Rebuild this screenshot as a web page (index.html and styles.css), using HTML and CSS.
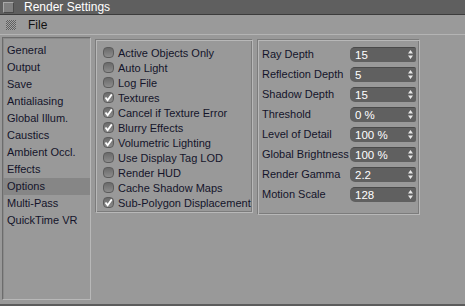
FILE: index.html
```html
<!DOCTYPE html>
<html lang="en">
<head>
    <meta charset="UTF-8">
    <title>Render Settings</title>
    <link rel="stylesheet" href="styles.css">
</head>
<body>
    <div class="titlebar">
        <span class="title-box"></span>
        <span class="title-text">Render Settings</span>
    </div>
    <div class="menubar">
        <span class="grip"></span>
        <span class="menu-item">File</span>
    </div>
    <div class="main">
        <ul class="pages">
            <li>General</li>
            <li>Output</li>
            <li>Save</li>
            <li>Antialiasing</li>
            <li>Global Illum.</li>
            <li>Caustics</li>
            <li>Ambient Occl.</li>
            <li>Effects</li>
            <li class="active">Options</li>
            <li>Multi-Pass</li>
            <li>QuickTime VR</li>
        </ul>

        <div class="group checks">
            <label class="check"><span class="box"></span>Active Objects Only</label>
            <label class="check"><span class="box"></span>Auto Light</label>
            <label class="check"><span class="box"></span>Log File</label>
            <label class="check on"><span class="box"><svg viewBox="0 0 11 11"><path d="M2.5 5.5 L4.6 8.2 L8.8 2.4"/></svg></span>Textures</label>
            <label class="check on"><span class="box"><svg viewBox="0 0 11 11"><path d="M2.5 5.5 L4.6 8.2 L8.8 2.4"/></svg></span>Cancel if Texture Error</label>
            <label class="check on"><span class="box"><svg viewBox="0 0 11 11"><path d="M2.5 5.5 L4.6 8.2 L8.8 2.4"/></svg></span>Blurry Effects</label>
            <label class="check on"><span class="box"><svg viewBox="0 0 11 11"><path d="M2.5 5.5 L4.6 8.2 L8.8 2.4"/></svg></span>Volumetric Lighting</label>
            <label class="check"><span class="box"></span>Use Display Tag LOD</label>
            <label class="check"><span class="box"></span>Render HUD</label>
            <label class="check"><span class="box"></span>Cache Shadow Maps</label>
            <label class="check on"><span class="box"><svg viewBox="0 0 11 11"><path d="M2.5 5.5 L4.6 8.2 L8.8 2.4"/></svg></span>Sub-Polygon Displacement</label>
        </div>

        <div class="group params">
            <div class="param"><span class="label">Ray Depth</span><span class="field">15<svg class="spin" viewBox="0 0 5 9"><path d="M2.5 0 L5 3.5 L0 3.5 Z M2.5 9 L5 5.5 L0 5.5 Z"/></svg></span></div>
            <div class="param"><span class="label">Reflection Depth</span><span class="field">5<svg class="spin" viewBox="0 0 5 9"><path d="M2.5 0 L5 3.5 L0 3.5 Z M2.5 9 L5 5.5 L0 5.5 Z"/></svg></span></div>
            <div class="param"><span class="label">Shadow Depth</span><span class="field">15<svg class="spin" viewBox="0 0 5 9"><path d="M2.5 0 L5 3.5 L0 3.5 Z M2.5 9 L5 5.5 L0 5.5 Z"/></svg></span></div>
            <div class="param"><span class="label">Threshold</span><span class="field">0 %<svg class="spin" viewBox="0 0 5 9"><path d="M2.5 0 L5 3.5 L0 3.5 Z M2.5 9 L5 5.5 L0 5.5 Z"/></svg></span></div>
            <div class="param"><span class="label">Level of Detail</span><span class="field">100 %<svg class="spin" viewBox="0 0 5 9"><path d="M2.5 0 L5 3.5 L0 3.5 Z M2.5 9 L5 5.5 L0 5.5 Z"/></svg></span></div>
            <div class="param"><span class="label">Global Brightness</span><span class="field">100 %<svg class="spin" viewBox="0 0 5 9"><path d="M2.5 0 L5 3.5 L0 3.5 Z M2.5 9 L5 5.5 L0 5.5 Z"/></svg></span></div>
            <div class="param"><span class="label">Render Gamma</span><span class="field">2.2<svg class="spin" viewBox="0 0 5 9"><path d="M2.5 0 L5 3.5 L0 3.5 Z M2.5 9 L5 5.5 L0 5.5 Z"/></svg></span></div>
            <div class="param"><span class="label">Motion Scale</span><span class="field">128<svg class="spin" viewBox="0 0 5 9"><path d="M2.5 0 L5 3.5 L0 3.5 Z M2.5 9 L5 5.5 L0 5.5 Z"/></svg></span></div>
        </div>
    </div>
</body>
</html>
```

FILE: styles.css
```css
html, body {
    margin: 0;
    padding: 0;
    width: 465px;
    height: 306px;
    overflow: hidden;
    background-color: #999999;
    font-family: "Liberation Sans", Arial, sans-serif;
    font-size: 11px;
    color: #14142a;
}

body {
    border-bottom: 2px solid #5c5c5c;
    box-sizing: border-box;
}

.titlebar {
    height: 14px;
    background-color: #5f5f5f;
    border-bottom: 1px solid #3c3c3c;
    display: flex;
    align-items: center;
    color: #ffffff;
    font-size: 12px;
}

.title-box {
    width: 9px;
    height: 9px;
    margin: 0 10px 0 3px;
    background-color: #808080;
    border: 1px solid #a8a8a8;
    border-right-color: #4a4a4a;
    border-bottom-color: #4a4a4a;
}

.menubar {
    height: 19px;
    background-color: #9a9a9a;
    border-bottom: 1px solid #b4b4b4;
    display: flex;
    align-items: center;
    color: #111111;
    font-size: 12px;
}

.grip {
    width: 10px;
    height: 10px;
    margin: 0 12px 0 6px;
    background: repeating-conic-gradient(#5e5e5e 0 25%, #a4a4a4 0 50%) 0 0 / 2px 2px;
}

.main {
    display: flex;
    align-items: flex-start;
    padding: 2px 0 0 2px;
    gap: 4px;
}

.pages {
    list-style: none;
    margin: 0;
    padding: 4px 0 0 0;
    width: 87px;
    height: 257px;
    border: 1px solid;
    border-color: #6c6c6c #b8b8b8 #b8b8b8 #6c6c6c;
    box-shadow: 1px 1px 0 #8a8a8a inset;
}

.pages li {
    height: 17px;
    line-height: 17px;
    padding-left: 4px;
}

.pages li.active {
    background-color: #868686;
}

.group {
    border: 1px solid;
    border-color: #7c7c7c #b8b8b8 #b8b8b8 #7c7c7c;
    box-shadow: 1px 1px 0 #b8b8b8 inset, -1px -1px 0 #7c7c7c inset;
    margin-top: 2px;
    box-sizing: border-box;
}

.checks {
    width: 158px;
    height: 174px;
    padding: 5px 0 0 7px;
}

.check {
    display: flex;
    align-items: center;
    height: 15px;
    white-space: nowrap;
}

.box {
    width: 11px;
    height: 11px;
    margin-right: 4px;
    border-radius: 4px;
    background: linear-gradient(#6a6a6a, #8c8c8c);
    border: 1px solid #5c5c5c;
    box-sizing: border-box;
    display: flex;
}

.box svg {
    width: 11px;
    height: 11px;
    margin: -1px;
    fill: none;
    stroke: #ffffff;
    stroke-width: 1.8;
}

.params {
    width: 163px;
    height: 176px;
    padding: 4px 0 0 4px;
}

.param {
    display: flex;
    align-items: center;
    height: 20px;
    white-space: nowrap;
}

.label {
    width: 88px;
    flex-shrink: 0;
}

.field {
    width: 66px;
    height: 15px;
    flex-shrink: 0;
    box-sizing: border-box;
    background-color: #606060;
    border-radius: 5px 2px 2px 5px;
    border-top: 1px solid #4a4a4a;
    color: #ffffff;
    padding-left: 5px;
    display: flex;
    align-items: center;
    justify-content: space-between;
    font-size: 11.5px;
}

.spin {
    width: 5px;
    height: 9px;
    margin-right: 3px;
    fill: #e8e8e8;
}
```
